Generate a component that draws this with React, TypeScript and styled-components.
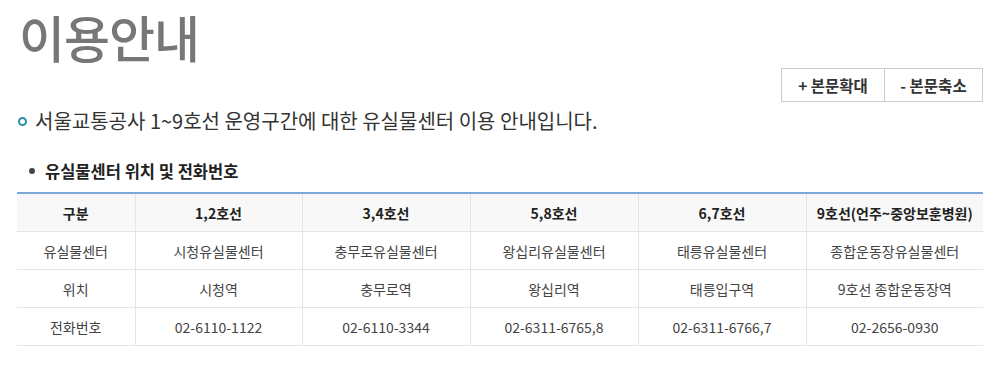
import React from "react";
import styled, { createGlobalStyle } from "styled-components";

const Global = createGlobalStyle`
  html, body { margin: 0; padding: 0; background: #fff; }
  body { font-family: "Noto Sans CJK KR", "Noto Sans", sans-serif; color: #333; }
`;

const Page = styled.div`
  width: 993px;
  padding: 0 10px 0 17px;
  box-sizing: border-box;
`;

const Title = styled.h1`
  margin: 0;
  padding: 4px 0 0 2px;
  font-size: 50px;
  line-height: 64px;
  font-weight: 500;
  color: #777;
  letter-spacing: -1px;
`;

const ToolRow = styled.div`
  display: flex;
  justify-content: flex-end;
`;

const ZoomGroup = styled.div`
  display: flex;
  border: 1px solid #ccc;
`;

const ZoomButton = styled.button<{ $first?: boolean }>`
  height: 32px;
  width: ${(p) => (p.$first ? "102px" : "98px")};
  border: 0;
  border-left: ${(p) => (p.$first ? "0" : "1px solid #ccc")};
  background: #fff;
  font-family: inherit;
  font-size: 15.5px;
  font-weight: 700;
  color: #333;
  padding: 0;
  cursor: pointer;
`;

const Intro = styled.p`
  display: flex;
  align-items: center;
  gap: 8px;
  margin: 4px 0 0 0;
  font-size: 20px;
  line-height: 30px;
  color: #333;
`;

const Ring = styled.span`
  width: 5px;
  height: 5px;
  border: 2.5px solid #2a8f9f;
  border-radius: 50%;
  flex: none;
  margin-left: 1px;
`;

const SubHead = styled.h2`
  display: flex;
  align-items: center;
  gap: 10px;
  margin: 24px 0 0 12px;
  font-size: 16.5px;
  line-height: 22px;
  font-weight: 700;
  color: #222;
`;

const Dot = styled.span`
  width: 6px;
  height: 6px;
  border-radius: 50%;
  background: #444;
  flex: none;
`;

const Table = styled.table`
  width: 966px;
  margin-top: 10px;
  border-collapse: collapse;
  border-top: 2px solid #7ea9d6;
  table-layout: fixed;
  font-size: 14px;
`;

const Th = styled.th`
  height: 37px;
  padding: 0;
  background: #f8f8f8;
  font-weight: 700;
  color: #222;
  border-bottom: 1px solid #e5e5e5;
  border-left: 1px solid #e5e5e5;
  &:first-child { border-left: 0; }
`;

const Td = styled.td`
  height: 37px;
  padding: 0;
  text-align: center;
  color: #444;
  border-bottom: 1px solid #e5e5e5;
  border-left: 1px solid #e5e5e5;
  &:first-child { border-left: 0; }
`;

const cols = [118, 167, 168, 168, 168, 177];
const head = ["구분", "1,2호선", "3,4호선", "5,8호선", "6,7호선", "9호선(언주~중앙보훈병원)"];
const rows = [
  ["유실물센터", "시청유실물센터", "충무로유실물센터", "왕십리유실물센터", "태릉유실물센터", "종합운동장유실물센터"],
  ["위치", "시청역", "충무로역", "왕십리역", "태릉입구역", "9호선 종합운동장역"],
  ["전화번호", "02-6110-1122", "02-6110-3344", "02-6311-6765,8", "02-6311-6766,7", "02-2656-0930"],
];

export default function App() {
  return (
    <>
      <Global />
      <Page>
        <Title>이용안내</Title>
        <ToolRow>
          <ZoomGroup>
            <ZoomButton $first>+ 본문확대</ZoomButton>
            <ZoomButton>- 본문축소</ZoomButton>
          </ZoomGroup>
        </ToolRow>
        <Intro>
          <Ring />
          서울교통공사 1~9호선 운영구간에 대한 유실물센터 이용 안내입니다.
        </Intro>
        <SubHead>
          <Dot />
          유실물센터 위치 및 전화번호
        </SubHead>
        <Table>
          <colgroup>
            {cols.map((w, i) => (
              <col key={i} style={{ width: w }} />
            ))}
          </colgroup>
          <thead>
            <tr>
              {head.map((h) => (
                <Th key={h}>{h}</Th>
              ))}
            </tr>
          </thead>
          <tbody>
            {rows.map((r, i) => (
              <tr key={i}>
                {r.map((c, j) => (
                  <Td key={j}>{c}</Td>
                ))}
              </tr>
            ))}
          </tbody>
        </Table>
      </Page>
    </>
  );
}
